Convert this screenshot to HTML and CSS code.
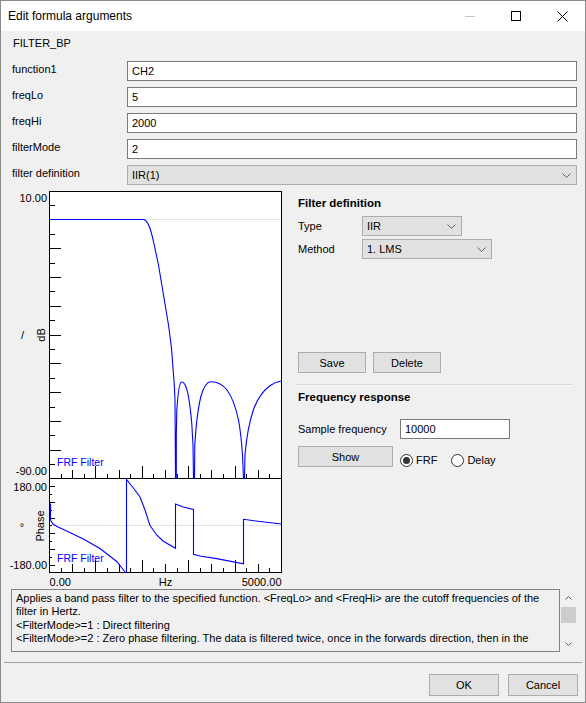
FILE: index.html
```html
<!DOCTYPE html>
<html lang="en">
<head>
  <meta charset="UTF-8">
  <title>Edit formula arguments</title>
  <link rel="stylesheet" href="styles.css">
</head>
<body>
  <div class="window">
    <!-- title bar -->
    <div class="titlebar">
      <span class="title">Edit formula arguments</span>
      <div class="caption-btn">
        <svg width="10" height="10"><path d="M0,5.5H10" stroke="#c6c6c6"/></svg>
      </div>
      <div class="caption-btn">
        <svg width="10" height="10"><rect x="0.5" y="0.5" width="9" height="9" fill="none" stroke="#000"/></svg>
      </div>
      <div class="caption-btn">
        <svg width="11" height="11"><path d="M0.5,0.5L10.5,10.5M10.5,0.5L0.5,10.5" stroke="#000"/></svg>
      </div>
    </div>

    <div class="func-name">FILTER_BP</div>

    <div class="args">
      <label>function1</label>
      <input class="text-input" type="text" value="CH2">
      <label>freqLo</label>
      <input class="text-input" type="text" value="5">
      <label>freqHi</label>
      <input class="text-input" type="text" value="2000">
      <label>filterMode</label>
      <input class="text-input" type="text" value="2">
      <label>filter definition</label>
      <div class="combo">
        <span>IIR(1)</span>
        <svg width="9" height="5"><path d="M0.5,0.5L4.5,4.5L8.5,0.5" fill="none" stroke="#606060"/></svg>
      </div>
    </div>

    <div class="filter-area">
      <svg class="chart" width="284" height="403" viewBox="1 186 284 403">
        <defs>
          <clipPath id="clip-mag"><rect x="49" y="191" width="233" height="288"/></clipPath>
          <clipPath id="clip-phase"><rect x="49" y="479" width="233" height="94"/></clipPath>
        </defs>
        <rect x="49.5" y="191.5" width="232" height="381" fill="#fff" stroke="#000"/>
        <path d="M49.5,478.5H281.5" stroke="#000"/>

        <!-- zero lines -->
        <path d="M50,219.5H281M50,525.5H281" stroke="#e3e3e3"/>

        <!-- magnitude ticks -->
        <path class="ticks" d="M49,205.5h6M49,234.5h6M49,263.5h6M49,291.5h6M49,320.5h6M49,349.5h6M49,378.5h6M49,407.5h6M49,435.5h6M49,464.5h6
          M49,219.5h12M49,248.5h12M49,277.5h12M49,306.5h12M49,335.5h12M49,363.5h12M49,392.5h12M49,421.5h12M49,450.5h12
          M61.5,478v-4M84.5,478v-4M107.5,478v-4M130.5,478v-4M153.5,478v-4M177.5,478v-4M200.5,478v-4M223.5,478v-4M246.5,478v-4M269.5,478v-4
          M72.5,478v-8M119.5,478v-8M165.5,478v-8M211.5,478v-8M258.5,478v-8
          M95.5,478v-12M142.5,478v-12M188.5,478v-12M235.5,478v-12"/>

        <!-- phase ticks -->
        <path class="ticks" d="M49,486.5h6M49,502.5h6M49,518.5h6M49,533.5h6M49,549.5h6M49,565.5h6
          M49,494.5h3M49,510.5h3M49,525.5h3M49,541.5h3M49,557.5h3
          M61.5,572v-4M84.5,572v-4M107.5,572v-4M130.5,572v-4M153.5,572v-4M177.5,572v-4M200.5,572v-4M223.5,572v-4M246.5,572v-4M269.5,572v-4
          M72.5,572v-8M119.5,572v-8M165.5,572v-8M211.5,572v-8M258.5,572v-8
          M95.5,572v-12M142.5,572v-12M188.5,572v-12M235.5,572v-12"/>

        <!-- curves -->
        <path class="curve" clip-path="url(#clip-mag)" d="M49.5,219.5H144C146.5,220.5 148,223 149.5,227C151,231 152.5,237 154,244L158.5,265L163.5,295L168.5,325L171.5,348L173,368L174.3,385L175,400L175.5,479
          M176.3,479V435L176.8,410C178,392 179.5,382.5 181.5,382C184,381.5 186.5,387 188,394C189.5,402 190.8,412 191.8,424L193,445L193.5,479
          M194.5,479L194.8,445C196,425 198,408 201,396C204,386 207,382 210.5,381.8C216,381.5 222,384 227,390C231.5,396 235.5,406 238.5,420C240,428 241.5,440 242.5,455L243.5,479
          M244.5,479L245,455C246.5,436 249.5,421 254,408C258,398 263,391 269,386.5C273.5,383 278,381.5 281.5,381"/>
        <path class="curve" clip-path="url(#clip-phase)" d="M50.5,503.5V520L53,524L57,526.5L66.7,531L83.3,539L100,548.5L116.7,561.5L125.5,572.5
          M126.5,572.5V479.5L133.3,488L140,497L145,510L150,525.6L156.7,535L163.3,541.2L175.5,548.2V504L183.3,507L193.5,509.5V554.4L200,556L216.7,558.6L243.5,563.9V519.3L260,521.5L281.5,524"/>

        <!-- labels -->
        <text class="axis-text" x="47" y="202" text-anchor="end">10.00</text>
        <text class="axis-text" x="47" y="475" text-anchor="end">-90.00</text>
        <text class="axis-text" x="47" y="491" text-anchor="end">180.00</text>
        <text class="axis-text" x="47" y="569" text-anchor="end">-180.00</text>
        <text class="axis-text" x="49.5" y="586">0.00</text>
        <text class="axis-text" x="165.5" y="586" text-anchor="middle">Hz</text>
        <text class="axis-text" x="281.5" y="586" text-anchor="end">5000.00</text>
        <text class="axis-text" transform="translate(45,335) rotate(-90)" text-anchor="middle">dB</text>
        <text class="axis-text" transform="translate(44,526) rotate(-90)" text-anchor="middle">Phase</text>
        <text class="axis-text" x="22.5" y="339" text-anchor="middle">/</text>
        <text class="axis-text" x="22" y="531" text-anchor="middle">°</text>
        <text class="legend" x="57" y="466">FRF Filter</text>
        <text class="legend" x="57" y="562">FRF Filter</text>
      </svg>

      <div class="filter-panel">
        <div class="group-title">Filter definition</div>
        <div class="field-row first-row">
          <span class="field-label">Type</span>
          <div class="combo type-combo">
            <span>IIR</span>
            <svg width="9" height="5"><path d="M0.5,0.5L4.5,4.5L8.5,0.5" fill="none" stroke="#606060"/></svg>
          </div>
        </div>
        <div class="field-row">
          <span class="field-label">Method</span>
          <div class="combo method-combo">
            <span>1. LMS</span>
            <svg width="9" height="5"><path d="M0.5,0.5L4.5,4.5L8.5,0.5" fill="none" stroke="#606060"/></svg>
          </div>
        </div>
        <div class="button-row">
          <button class="btn small-btn">Save</button>
          <button class="btn small-btn">Delete</button>
        </div>

        <div class="panel-sep"></div>

        <div class="group-title freq-title">Frequency response</div>
        <div class="field-row sample-row">
          <span class="sample-label">Sample frequency</span>
          <input class="text-input sample-input" type="text" value="10000">
        </div>
        <div class="show-row">
          <button class="btn show-btn">Show</button>
          <label class="radio-option"><span class="radio checked"></span>FRF</label>
          <label class="radio-option"><span class="radio"></span>Delay</label>
        </div>
      </div>
    </div>

    <div class="description-row">
      <div class="description">
        Applies a band pass filter to the specified function. &lt;FreqLo&gt; and &lt;FreqHi&gt; are the cutoff frequencies of the<br>
        filter in Hertz.<br>
        &lt;FilterMode&gt;=1 : Direct filtering<br>
        &lt;FilterMode&gt;=2 : Zero phase filtering. The data is filtered twice, once in the forwards direction, then in the
      </div>
      <div class="scrollbar">
        <div class="scroll-arrow">
          <svg width="7" height="4"><path d="M0.5,3.5L3.5,0.5L6.5,3.5" fill="none" stroke="#606060"/></svg>
        </div>
        <div class="scroll-thumb"></div>
        <div class="scroll-track"></div>
        <div class="scroll-arrow">
          <svg width="7" height="4"><path d="M0.5,0.5L3.5,3.5L6.5,0.5" fill="none" stroke="#606060"/></svg>
        </div>
      </div>
    </div>

    <div class="footer-sep"></div>

    <div class="footer">
      <button class="btn dialog-btn">OK</button>
      <button class="btn dialog-btn">Cancel</button>
    </div>
  </div>
</body>
</html>
```

FILE: styles.css
```css
body {
  margin: 0;
  font-family: "Liberation Sans", Arial, sans-serif;
  font-size: 11px;
  color: #000;
}

.window {
  width: 586px;
  height: 703px;
  box-sizing: border-box;
  border: 1px solid #8a8a8a;
  background-color: #f0f0f0;
  display: flex;
  flex-direction: column;
}

.titlebar {
  height: 30px;
  flex-shrink: 0;
  background-color: #fff;
  display: flex;
  align-items: center;
}

.title {
  flex: 1;
  padding-left: 7px;
  font-size: 12px;
}

.caption-btn {
  width: 46px;
  height: 30px;
  display: flex;
  align-items: center;
  justify-content: center;
}

.caption-btn svg {
  display: block;
}

.func-name {
  padding: 6px 0 0 12px;
  line-height: 13px;
}

.args {
  display: grid;
  grid-template-columns: 115px 1fr;
  row-gap: 6px;
  margin: 11px 8px 0 11px;
}

.args label {
  padding-top: 2px;
  line-height: 13px;
}

.text-input {
  height: 20px;
  box-sizing: border-box;
  margin: 0;
  padding: 0 4px;
  border: 1px solid #7a7a7a;
  background-color: #fff;
  font: inherit;
  color: #000;
  outline: none;
}

.combo {
  height: 20px;
  box-sizing: border-box;
  border: 1px solid #adadad;
  background-color: #e1e1e1;
  display: flex;
  align-items: center;
  justify-content: space-between;
  padding: 0 5px 0 4px;
}

.combo svg {
  display: block;
}

.filter-area {
  display: flex;
  height: 403px;
  margin-top: 1px;
  flex-shrink: 0;
}

.chart {
  display: block;
  flex-shrink: 0;
}

.chart .ticks {
  stroke: #000;
  fill: none;
  shape-rendering: crispEdges;
}

.chart .curve {
  stroke: #0000ff;
  stroke-width: 1.1;
  fill: none;
}

.axis-text {
  font-family: "Liberation Sans", Arial, sans-serif;
  font-size: 11px;
  fill: #000;
}

.legend {
  font-family: "Liberation Sans", Arial, sans-serif;
  font-size: 10.5px;
  fill: #0000ff;
}

.filter-panel {
  flex: 1;
  padding: 10px 0 0 13px;
}

.group-title {
  font-weight: bold;
  font-size: 11.5px;
  line-height: 14px;
}

.field-row {
  display: flex;
  align-items: center;
  margin-top: 3px;
}

.field-row.first-row {
  margin-top: 6px;
}

.field-label {
  width: 64px;
}

.type-combo {
  width: 100px;
}

.method-combo {
  width: 130px;
}

.button-row {
  display: flex;
  gap: 7px;
  margin-top: 93px;
}

.btn {
  margin: 0;
  padding: 0;
  height: 21px;
  box-sizing: border-box;
  border: 1px solid #adadad;
  background-color: #e1e1e1;
  font: inherit;
  color: #000;
}

.small-btn {
  width: 68px;
}

.panel-sep {
  margin: 11px 13px 0 -3px;
  border-top: 1px solid #dadada;
  border-bottom: 1px solid #fafafa;
}

.freq-title {
  margin-top: 4px;
}

.field-row.sample-row {
  margin-top: 15px;
}

.sample-label {
  width: 102px;
}

.sample-input {
  width: 110px;
}

.show-row {
  display: flex;
  align-items: flex-end;
  margin-top: 7px;
}

.show-btn {
  width: 95px;
  margin-right: 7px;
}

.radio-option {
  display: flex;
  align-items: center;
  line-height: 13px;
  margin-right: 14px;
}

.radio {
  width: 13px;
  height: 13px;
  box-sizing: border-box;
  border: 1px solid #333;
  border-radius: 50%;
  background-color: #fff;
  margin-right: 3px;
  display: flex;
  align-items: center;
  justify-content: center;
}

.radio.checked::after {
  content: "";
  width: 7px;
  height: 7px;
  border-radius: 50%;
  background-color: #333;
}

.description-row {
  display: flex;
  padding-left: 10px;
  flex-shrink: 0;
}

.description {
  width: 549px;
  height: 63px;
  box-sizing: border-box;
  border: 1px solid #828282;
  padding: 2px 4px;
  line-height: 13.3px;
  white-space: nowrap;
  overflow: hidden;
}

.scrollbar {
  width: 17px;
  height: 63px;
  display: flex;
  flex-direction: column;
}

.scroll-arrow {
  height: 17px;
  display: flex;
  align-items: center;
  justify-content: center;
}

.scroll-arrow svg {
  display: block;
}

.scroll-thumb {
  height: 16px;
  margin: 1px 1px 0 1px;
  background-color: #cdcdcd;
}

.scroll-track {
  flex: 1;
}

.footer-sep {
  margin: 10px 3px 0 3px;
  border-top: 1px solid #a0a0a0;
}

.footer {
  display: flex;
  justify-content: flex-end;
  gap: 9px;
  margin-top: 11px;
  padding-right: 7px;
}

.dialog-btn {
  width: 70px;
  height: 22px;
}
```
